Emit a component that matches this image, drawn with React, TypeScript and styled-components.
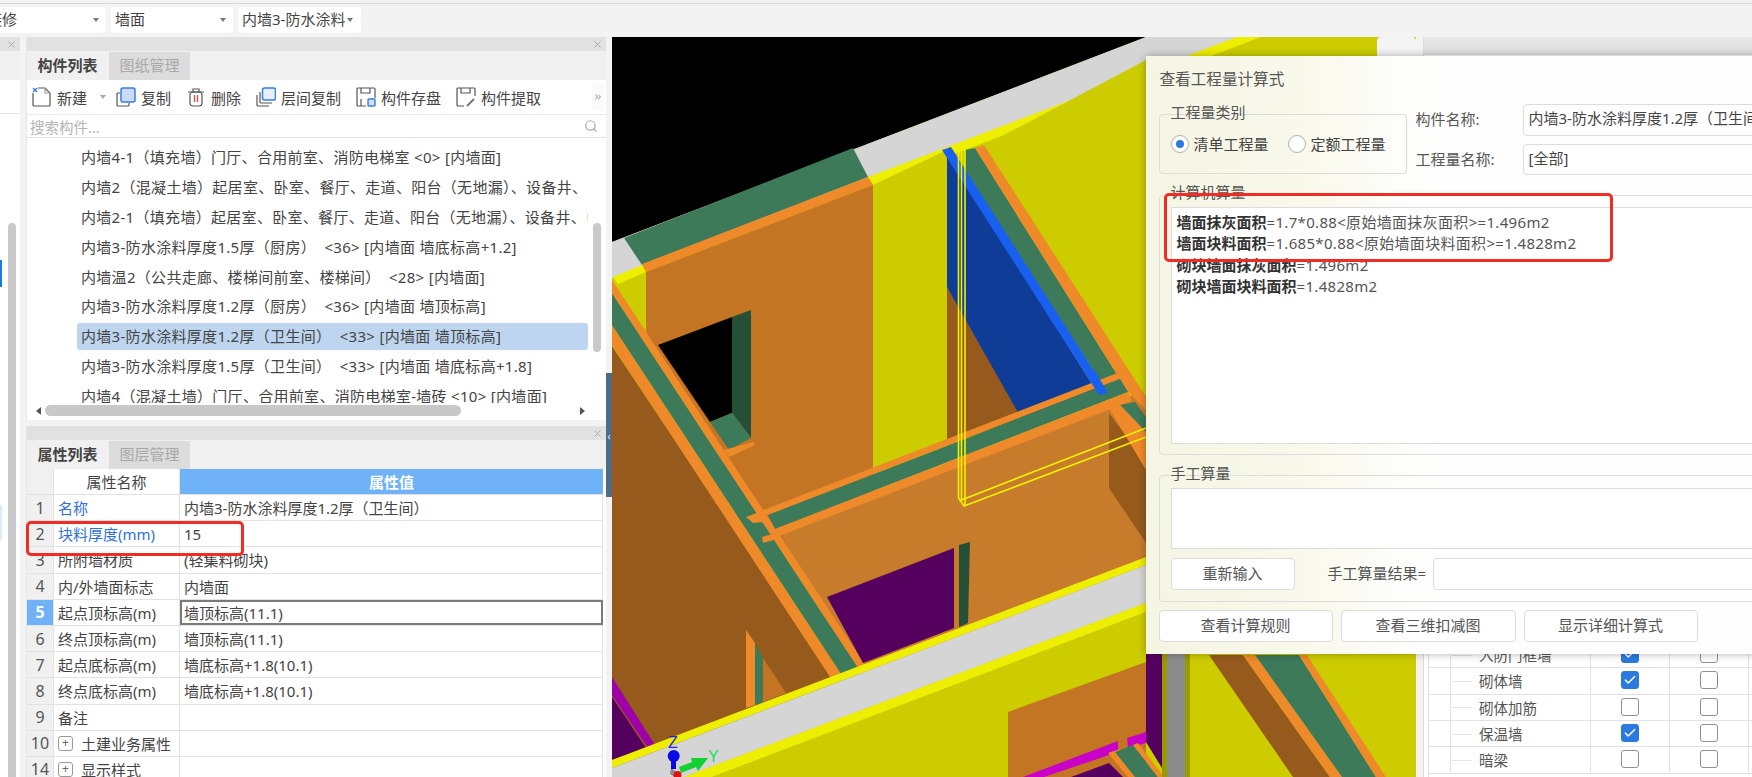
import React from 'react';
import styled, { createGlobalStyle } from 'styled-components';
import { X, Search, ChevronsRight, Check } from 'lucide-react';

const Global = createGlobalStyle`
  html, body { margin: 0; padding: 0; overflow: hidden; background: #f3f3f3; }
  * { box-sizing: border-box; }
  body { font-family: "Noto Sans", "Noto Sans CJK SC", sans-serif; font-size: 15px; color: #444; }
`;

const Root = styled.div`
  position: relative; width: 1752px; height: 777px; overflow: hidden;
  background: #f3f3f3; display: flex; flex-direction: column;
`;
const TopBar = styled.div`
  height: 37px; flex: none; display: flex; gap: 5px; padding-top: 7px; margin-top: 0;
  background: linear-gradient(#f3f3f3 3px, #d8d8d8 3px, #d8d8d8 4px, #f3f3f3 4px); overflow: hidden;
`;
const Combo = styled.div<{ $w: number; $ml?: number; $pad?: number }>`
  position: relative; width: ${p => p.$w}px; height: 26px; margin-left: ${p => p.$ml ?? 0}px;
  padding-left: ${p => p.$pad ?? 4}px; background: #fff; border-radius: 3px; line-height: 25px;
  white-space: nowrap; color: #444; display: flex;
`;
const Caret = styled.span<{ $right: number }>`
  position: absolute; right: ${p => p.$right}px; top: 11px; width: 0; height: 0;
  border-left: 3px solid transparent; border-right: 3px solid transparent; border-top: 4px solid #777;
`;
const Main = styled.div`display: flex; height: 740px; flex: none;`;
const LeftPanel = styled.div`
  position: relative; width: 20px; flex: none; margin-right: 6px; background: #fff;
  display: flex; flex-direction: column; overflow: hidden;
`;
const TitleBar = styled.div`
  height: 14px; flex: none; background: #e1e1e1; display: flex; align-items: center; justify-content: flex-end;
  padding-right: 3px; color: #aaa;
`;
const BlankTabs = styled.div`height: 29px; flex: none; background: #f0f0f0;`;
const BlankTools = styled.div`height: 34px; flex: none; border-bottom: 1px solid #e4e4e4;`;
const EdgeMark = styled.div<{ $top: number; $h: number; $c: string }>`
  position: absolute; left: 0; width: 2px; top: ${p => p.$top}px; height: ${p => p.$h}px; background: ${p => p.$c};
`;
const VScroll = styled.div<{ $left: number; $top: number; $h: number }>`
  position: absolute; left: ${p => p.$left}px; top: ${p => p.$top}px; width: 8px; height: ${p => p.$h}px;
  background: #c9c9c9; border-radius: 4px;
`;
const MidColumn = styled.div`width: 580px; flex: none; display: flex; flex-direction: column; gap: 6px;`;
const Panel = styled.section<{ $h: number }>`
  position: relative; height: ${p => p.$h}px; flex: none; background: #fff; display: flex; flex-direction: column;
  overflow: hidden; border-left: 1px solid #e6e6e6;
`;
const Tabs = styled.div`
  height: 29px; flex: none; display: flex; align-items: flex-end; background: #f0f0f0; gap: 1px;
`;
const Tab = styled.div<{ $on?: boolean }>`
  width: 81px; height: 28px; line-height: 27px; text-align: center; font-size: 15px;
  font-weight: ${p => (p.$on ? 700 : 400)}; color: ${p => (p.$on ? '#444' : '#a9a9a9')};
  background: ${p => (p.$on ? '#f0f0f0' : '#dcdcdc')};
`;
const Toolbar = styled.div`
  height: 35px; flex: none; display: flex; align-items: center; padding-left: 5px; padding-right: 2px;
  border-bottom: 1px solid #e8e8e8;
`;
const Tool = styled.div<{ $w: number }>`
  position: relative; width: ${p => p.$w}px; flex: none; display: flex; align-items: center; gap: 5px; white-space: nowrap; color: #444;
`;
const ToolCaret = styled.span`
  width: 0; height: 0; margin-left: 8px; border-left: 3px solid transparent; border-right: 3px solid transparent; border-top: 4px solid #aaa;
`;
const MoreBtn = styled.div`
  margin-left: auto; width: 12px; height: 28px; display: flex; align-items: center; justify-content: center; color: #777;
  border-radius: 3px; background: #fafafa;
`;
const SearchRow = styled.div`
  height: 23px; flex: none; display: flex; align-items: center; justify-content: space-between;
  padding: 0 8px 0 3px; color: #b4b4b4; font-size: 14.5px; border-bottom: 1px solid #e4e4e4;
`;
const List = styled.div`height: 265px; flex: none; padding: 4px 18px 0 50px; overflow: hidden; position: relative;`;
const ListRow = styled.div<{ $on?: boolean }>`
  height: 29.8px; display: flex; align-items: center; padding-left: 4px; white-space: pre; overflow: hidden;
  font-size: 15px; letter-spacing: 0.3px; color: #444; border-radius: 3px; position: relative; width: 511px;
  &::before {
    content: ''; position: absolute; left: 0; right: 0; top: 2px; bottom: 1px; border-radius: 3px;
    background: ${p => (p.$on ? '#bdd5ee' : 'transparent')}; z-index: 0;
  }
  & > span { position: relative; z-index: 1; }
`;
const HScroll = styled.div`
  height: 17px; flex: none; position: relative; display: flex; align-items: flex-start; padding: 2px 0 0 9px; gap: 4px;
`;
const Arrow = styled.span<{ $dir: 'l' | 'r' }>`
  width: 0; height: 0; margin-top: 2px; border-top: 4px solid transparent; border-bottom: 4px solid transparent;
  ${p => (p.$dir === 'l' ? 'border-right: 5px solid #555;' : 'border-left: 5px solid #555;')}
`;
const HThumb = styled.div`width: 416px; height: 11px; border-radius: 6px; background: #c8c8c8; margin-right: 115px;`;
const Table = styled.div`display: flex; flex-direction: column; width: 576px;`;
const Row = styled.div<{ $h?: number }>`
  display: grid; grid-template-columns: 27px 126px 423px; height: ${p => p.$h ?? 26.2}px; flex: none;
  border-bottom: 1px solid #e2e2e2;
`;
const Idx = styled.div<{ $on?: boolean }>`
  background: ${p => (p.$on ? '#70b2f6' : '#f0f0f0')}; color: ${p => (p.$on ? '#fff' : '#555')};
  font-weight: ${p => (p.$on ? 700 : 400)}; font-size: 16px; display: flex; align-items: center; justify-content: center;
  border-right: 1px solid #e2e2e2;
`;
const NameCell = styled.div<{ $blue?: boolean }>`
  display: flex; align-items: center; padding-left: 4px; gap: 8px; white-space: nowrap; border-right: 1px solid #e2e2e2;
  color: ${p => (p.$blue ? '#2f6fdc' : '#444')}; font-size: 15px;
`;
const HeadName = styled(NameCell)`justify-content: center; padding-left: 0;`;
const ValueCell = styled.div<{ $focus?: boolean }>`
  display: flex; align-items: center; padding-left: 4px; white-space: nowrap; color: #444; font-size: 15px;
  border-right: 1px solid #e2e2e2; ${p => (p.$focus ? 'border: 2px solid #7a7a7a; padding-left: 2px;' : '')}
`;
const HeadValue = styled.div`
  background: #70b2f6; color: #fff; font-weight: 700; display: flex; align-items: center; justify-content: center; font-size: 15px;
`;
const Expand = styled.span`
  width: 15px; height: 15px; border: 1px solid #999; border-radius: 3px; display: flex; align-items: center; justify-content: center;
  font-size: 12px; line-height: 1; color: #666; flex: none;
`;
const Divider = styled.div`position: relative; width: 6px; flex: none; background: #f3f3f3;`;
const DividerMark = styled.div`
  position: absolute; left: 0; top: 336px; width: 6px; height: 124px; background: #4f6b86; color: #dfe6ee;
  display: flex; align-items: center; justify-content: center; font-size: 11px; overflow: hidden;
`;
const Viewport = styled.div`width: 804px; height: 740px; flex: none; background: #cccc00; overflow: hidden; line-height: 0;`;
const RightPanel = styled.div`
  width: 329px; flex: none; margin-left: 7px; background: #fff; display: flex; flex-direction: column; border-left: 1px solid #dcdcdc;
`;
const RightTitle = styled.div`height: 18px; flex: none; background: linear-gradient(#e9e9e9, #dcdcdc);`;
const CheckList = styled.div`padding: 586px 0 0 4px; display: flex; flex-direction: column;`;
const CheckRow = styled.div`
  display: grid; grid-template-columns: 21px 141px 79px 79px; height: 26.33px; flex: none;
  border-top: 1px solid #e2e2e2; border-left: 1px solid #e2e2e2;
`;
const TreeCell = styled.div`
  position: relative; border-left: 1px solid #e2e2e2; border-right: 1px solid #e2e2e2; display: flex; align-items: center; padding-left: 28px;
  font-size: 14.5px; color: #555; white-space: nowrap;
  &::before { content: ''; position: absolute; left: 1px; top: 50%; width: 20px; border-top: 1px solid #e4e4e4; }
`;
const BoxCell = styled.div`display: flex; align-items: center; justify-content: center; border-right: 1px solid #e2e2e2;`;
const Tick = styled.span<{ $on?: boolean }>`
  width: 18px; height: 18px; margin-top: -1px; border-radius: 3px; display: flex; align-items: center; justify-content: center; color: #fff;
  ${p => (p.$on ? 'background: #2b7ae0; border: 1px solid #2b7ae0;' : 'background: #fff; border: 1px solid #8f8f8f;')}
`;
const SideTab = styled.div`
  position: absolute; left: 1377px; top: 37px; width: 39px; height: 19px; background: #f4f4f4; border-radius: 4px 4px 0 0;
`;

/* dialog */
const Dialog = styled.div`
  position: absolute; left: 1146px; top: 56px; width: 640px; height: 598px; padding: 0 0 0 12.5px;
  background: linear-gradient(90deg, #f5f5e4 0, #f9f9ec 170px, #fcfcf8 235px, #fefefe 300px, #fefefe 100%);
  box-shadow: 0 0 8px rgba(0, 0, 0, 0.3); display: flex; flex-direction: column;
`;
const DialogTitle = styled.div`height: 58px; flex: none; padding: 11px 0 0 1px; line-height: 24px; font-size: 15.6px; color: #555;`;
const TopRow = styled.div`display: flex; height: 60px; flex: none;`;
const Group = styled.div<{ $w?: number; $h: number }>`
  position: relative; flex: none; width: ${p => (p.$w ? `${p.$w}px` : 'auto')}; height: ${p => p.$h}px;
  border: 1px solid #dcdcdc; border-radius: 4px;
`;
const Legend = styled.span<{ $top?: number }>`
  position: absolute; left: 11px; top: ${p => p.$top ?? -13}px; line-height: 20px; font-size: 15px; color: #555; white-space: nowrap;
`;
const RadioRow = styled.div`display: flex; align-items: center; padding: 19px 0 0 11px; line-height: 20px;`;
const Radio = styled.span<{ $on?: boolean }>`
  width: 18px; height: 18px; border-radius: 50%; border: 1px solid #b0b0b0; background: #fff; flex: none; margin-right: 5px;
  display: flex; align-items: center; justify-content: center;
  &::after { content: ''; width: 8px; height: 8px; border-radius: 50%; background: ${p => (p.$on ? '#2b7ae0' : 'transparent')}; }
`;
const RadioLabel = styled.span<{ $mr?: number }>`margin-right: ${p => p.$mr ?? 0}px; font-size: 15px; color: #444; white-space: nowrap;`;
const Fields = styled.div`display: grid; grid-template-columns: 107px 1fr; row-gap: 8px; margin-left: 9px; margin-top: -10px; height: 71px; flex: 1;`;
const FieldLabel = styled.div`display: flex; align-items: center; padding-bottom: 3px; font-size: 15px; color: #555; white-space: nowrap;`;
const Input = styled.div<{ $w?: number; $h?: number }>`
  height: ${p => p.$h ?? 31}px; ${p => (p.$w ? `width: ${p.$w}px;` : '')} background: #fff; border: 1px solid #dcdcdc; border-radius: 4px;
  padding-left: 5px; line-height: 26px; font-size: 15px; color: #444; white-space: nowrap; overflow: hidden;
`;
const CalcGroup = styled(Group)`margin-top: 21px; padding: 11px 0 0 11px;`;
const CalcArea = styled.div`
  height: 237px; background: #fff; border: 1px solid #dcdcdc; padding: 4px 0 0 5px; font-size: 15px; letter-spacing: 0.32px; line-height: 21.3px; color: #555; white-space: pre;
`;
const Bold = styled.b`color: #333; font-weight: 700; letter-spacing: 0;`;
const ManualGroup = styled(Group)`margin-top: 20px; padding: 12px 0 0 11px; display: flex; flex-direction: column; gap: 9px;`;
const ManualArea = styled.div`height: 61px; flex: none; background: #fff; border: 1px solid #dcdcdc;`;
const ManualRow = styled.div`display: flex; align-items: center; height: 32px;`;
const Btn = styled.div<{ $w: number; $h?: number }>`
  width: ${p => p.$w}px; height: ${p => p.$h ?? 32}px; flex: none; background: #fff; border: 1px solid #dcdcdc; border-radius: 4px;
  display: flex; align-items: center; justify-content: center; padding-bottom: 3px; font-size: 15px; color: #555; white-space: nowrap;
`;
const ResultLabel = styled.span`margin: 0 7px 3px 33px; font-size: 15px; color: #555; white-space: nowrap;`;
const BottomRow = styled.div`display: flex; gap: 8px; margin-top: 8px;`;
const RedBox = styled.div<{ $l: number; $t: number; $w: number; $h: number }>`
  position: absolute; left: ${p => p.$l}px; top: ${p => p.$t}px; width: ${p => p.$w}px; height: ${p => p.$h}px;
  border: 3px solid #f02c24; border-radius: 5px; pointer-events: none;
`;

/* ---------- drawings ---------- */
const C = {
  black: '#000000', grey: '#d5d5d5', yel: '#eeee00', olive: '#cccc00', or: '#ee8a2a', wall: '#c47524', wall2: '#c67c2b',
  brown: '#955a1c', green: '#3d7a5a', dgreen: '#264f38', blue: '#0f3c96', bblue: '#1a60f0', purple: '#55005f', mag: '#c800c8', mag2: '#a000a8',
};
const polys: [string, string][] = [
  [C.black, '612,37 1146,37 612,242'],
  [C.grey, '612,242 1146,37 1240,37 868,178 642,266 612,278'],
  [C.green, '853,148 868,177 642,265 624,238'],
  [C.yel, '613,277 642,265 646,272 618,284'],
  [C.yel, '868,177 1237,37 1261,37 873,185'],
  [C.or, '868,177 873,185 646,272 642,264'],
  [C.wall, '646,272 873,185 873,520 780,560 646,332'],
  [C.wall2, '779,530 1146,390 1146,570 860,680'],
  [C.olive, '873,185 947,150 947,470 873,490'],
  [C.brown, '947,287 1030,415 947,445'],
  [C.blue, '947,153 1100,397 1025,425 947,287'],
  [C.olive, '985,145 1146,60 1146,397'],
  [C.green, '965,150 975,148 1128,392 1108,393 965,172'],
  [C.bblue, '942,150 951,147 1108,393 1099,395'],
  [C.or, '975,148 984,145 1146,397 1146,410 1128,392'],
  [C.brown, '612,346 648,400 834,677 860,680 612,790'],
  [C.or, '612,325 612,345 832,680 845,680'],
  [C.green, '612,293 612,325 845,680 866,680'],
  [C.or, '612,280 612,293 866,680 875,680'],
  [C.black, '658,345 732,317 732,413 710,422'],
  [C.dgreen, '732,317 751,310 751,438 732,413'],
  [C.green, '710,422 732,413 751,438 729,450'],
  [C.or, '724,450 753,442 755,445 729,457'],
  [C.or, '761,511 1120,372 1125,377 768,515'],
  [C.green, '768,515 1120,379 1128,392 775,529'],
  [C.or, '775,529 1128,392 1132,401 779,536'],
  [C.bblue, '1085,373 1095,371 1108,393 1099,395'],
  [C.or, '746,517 762,511 764,522 753,523'],
  [C.or, '762,537 779,532 781,538 763,543'],
  [C.brown, '1109,413 1146,463 1146,543 1109,488'],
  [C.green, '1120,405 1135,402 1146,417 1146,432'],
  [C.or, '1109,408 1120,405 1146,432 1146,470'],
  [C.purple, '827,597 954,548 954,628 863,663'],
  [C.dgreen, '959,545 970,542 968,623 959,627'],
  [C.or, '746,630 755,643 755,705 746,708'],
  [C.green, '755,643 763,658 763,702 755,705'],
  [C.wall, '763,658 786,693 763,702'],
  [C.mag2, '612,677 655,745 648,748 612,695'],
  [C.purple, '612,697 646,748 612,760'],
  [C.yel, '612,760 1146,557 1146,565 612,768'],
  [C.grey, '612,768 1146,565 1146,603 684,777 612,777'],
  [C.yel, '684,777 1146,603 1146,612 712,777'],
  [C.olive, '712,777 1146,612 1146,660 1008,712 1008,777'],
  [C.wall, '1008,712 1146,662 1146,777 1008,777'],
  [C.purple, '1071,777 1109,763 1123,777'],
  [C.mag, '1023,777 1118,741 1118,752 1044,777'],
  [C.mag, '1127,738 1146,732 1146,743 1128,748'],
  [C.or, '1108,753 1120,749 1145,777 1128,777'],
  [C.green, '1115,752 1133,745 1158,777 1135,777'],
  [C.or, '1133,745 1138,743 1164,777 1158,777'],
  [C.purple, '1146,654 1162,654 1162,768 1146,742'],
  ['#999900', '1162,654 1190,654 1190,777 1162,777'],
  ['#8c8c8c', '1167,654 1185,654 1185,777 1167,777'],
  [C.brown, '1209,655 1243,655 1330,777 1293,777'],
  [C.or, '1243,655 1255,655 1342,777 1330,777'],
  [C.green, '1255,655 1299,655 1376,777 1342,777'],
  [C.or, '1299,655 1307,655 1386,777 1376,777'],
];

const Scene = () => (
  <svg width="804" height="740" viewBox="612 37 804 740">
    <rect x="612" y="37" width="804" height="740" fill={C.olive} />
    {polys.map(([f, p], i) => <polygon key={i} points={p} fill={f} />)}
    <g fill="none" stroke="#f2f200" strokeWidth="1.6">
      <path d="M958.5 152V498L964 506L1146 437" />
      <path d="M965 150V506" />
      <path d="M961.5 152V500L1146 428" />
      <path d="M958 152L965 149" />
    </g>
    <polygon points="671,768 681,775 675,777 670,774" fill="#8a8a8a" />
    <rect x="671" y="756" width="5" height="13" fill="#0a0ae6" />
    <circle cx="673.7" cy="756" r="6" fill="#0a0ae6" />
    <circle cx="677.5" cy="775" r="4" fill="#e01010" />
    <polygon points="679,767 692,762 691,758 708,758 698,771 696,767 681,773" fill="#12d030" />
    <text x="668" y="748" fontSize="16" fill="#2424e0" fontFamily="Liberation Sans, sans-serif">Z</text>
    <text x="708" y="762" fontSize="16" fill="#18e050" fontFamily="Liberation Sans, sans-serif">Y</text>
  </svg>
);

const Ico = ({ children }: { children: React.ReactNode }) => (
  <svg width="20" height="20" viewBox="0 0 20 20" fill="none" stroke="#555" strokeWidth="1.2" style={{ flex: 'none' }}>{children}</svg>
);
const NewIcon = () => (
  <Ico>
    <path d="M1 6V18a1 1 0 0 0 1 1H17a1 1 0 0 0 1-1V6L13 1H6" />
    <path d="M13 1V6H18" stroke="#999" />
    <path d="M1 1L5 5M5 1L1 5" stroke="#3a7be0" strokeWidth="1.4" />
  </Ico>
);
const CopyIcon = () => (
  <Ico>
    <path d="M4 6H2a1 1 0 0 0-1 1V18a1 1 0 0 0 1 1H12a1 1 0 0 0 1-1V16" />
    <rect x="5" y="1" width="14" height="14" rx="2" stroke="#3a7be0" strokeWidth="1.5" fill="#c7dcf7" />
  </Ico>
);
const TrashIcon = () => (
  <Ico>
    <path d="M2 5H18M7 5V2H13V5" />
    <rect x="4" y="5" width="12" height="14" rx="3" />
    <path d="M8.5 8V15M11.5 8V15" stroke="#e05545" strokeWidth="1.4" />
  </Ico>
);
const LayerIcon = () => (
  <Ico>
    <path d="M1 8V18a1 1 0 0 0 1 1H13" />
    <path d="M4 5V15a1 1 0 0 0 1 1H16" />
    <rect x="6.5" y="1" width="13" height="12" rx="2" stroke="#3a7be0" strokeWidth="1.5" fill="#e6effb" />
  </Ico>
);
const SaveIcon = () => (
  <Ico>
    <path d="M10 19H2a1 1 0 0 1-1-1V2a1 1 0 0 1 1-1H18a1 1 0 0 1 1 1V11" />
    <path d="M5 1V6H14V1M5 19V12" />
    <rect x="12" y="12" width="7" height="7" rx="1" stroke="#3a7be0" strokeWidth="1.4" fill="#cfe2f8" />
  </Ico>
);
const PickIcon = () => (
  <Ico>
    <path d="M8 19H2a1 1 0 0 1-1-1V2a1 1 0 0 1 1-1H18a1 1 0 0 1 1 1V9" />
    <path d="M5 1V6H14V1" />
    <path d="M11 19L18 12" stroke="#777" strokeWidth="2" />
  </Ico>
);

const listItems = [
  '内墙4-1（填充墙）门厅、合用前室、消防电梯室 <0> [内墙面]',
  '内墙2（混凝土墙）起居室、卧室、餐厅、走道、阳台（无地漏）、设备井、电梯前室',
  '内墙2-1（填充墙）起居室、卧室、餐厅、走道、阳台（无地漏）、设备井、电梯前室',
  '内墙3-防水涂料厚度1.5厚（厨房）  <36> [内墙面 墙底标高+1.2]',
  '内墙温2（公共走廊、楼梯间前室、楼梯间）  <28> [内墙面]',
  '内墙3-防水涂料厚度1.2厚（厨房）  <36> [内墙面 墙顶标高]',
  '内墙3-防水涂料厚度1.2厚（卫生间）  <33> [内墙面 墙顶标高]',
  '内墙3-防水涂料厚度1.5厚（卫生间）  <33> [内墙面 墙底标高+1.8]',
  '内墙4（混凝土墙）门厅、合用前室、消防电梯室-墙砖 <10> [内墙面]',
];
const props: [string, string, string][] = [
  ['1', '名称', '内墙3-防水涂料厚度1.2厚（卫生间）'],
  ['2', '块料厚度(mm)', '15'],
  ['3', '所附墙材质', '(轻集料砌块)'],
  ['4', '内/外墙面标志', '内墙面'],
  ['5', '起点顶标高(m)', '墙顶标高(11.1)'],
  ['6', '终点顶标高(m)', '墙顶标高(11.1)'],
  ['7', '起点底标高(m)', '墙底标高+1.8(10.1)'],
  ['8', '终点底标高(m)', '墙底标高+1.8(10.1)'],
  ['9', '备注', ''],
];
const checks: [string, boolean, boolean][] = [
  ['入防门框墙', true, false],
  ['砌体墙', true, false],
  ['砌体加筋', false, false],
  ['保温墙', true, false],
  ['暗梁', false, false],
];

const CheckBox = ({ on }: { on: boolean }) => (
  <Tick $on={on}>{on && <Check size={14} strokeWidth={2.6} />}</Tick>
);

export default function App() {
  return (
    <Root>
      <Global />
      <TopBar>
        <Combo $w={132} $ml={-26} $pad={13}>装修<Caret $right={7} /></Combo>
        <Combo $w={122}>墙面<Caret $right={7} /></Combo>
        <Combo $w={123}>内墙3-防水涂料<Caret $right={8} /></Combo>
      </TopBar>
      <Main>
        <LeftPanel>
          <TitleBar><X size={11} /></TitleBar>
          <BlankTabs />
          <BlankTools />
          <EdgeMark $top={223} $h={27} $c="#1a7ae0" />
          <EdgeMark $top={468} $h={35} $c="#dcebfb" />
          <VScroll $left={8} $top={186} $h={560} />
        </LeftPanel>
        <MidColumn>
          <Panel $h={383}>
            <TitleBar><X size={11} /></TitleBar>
            <Tabs><Tab $on>构件列表</Tab><Tab>图纸管理</Tab></Tabs>
            <Toolbar>
              <Tool $w={84}><NewIcon />新建<ToolCaret /></Tool>
              <Tool $w={70}><CopyIcon />复制</Tool>
              <Tool $w={70}><TrashIcon />删除</Tool>
              <Tool $w={100}><LayerIcon />层间复制</Tool>
              <Tool $w={100}><SaveIcon />构件存盘</Tool>
              <Tool $w={100}><PickIcon />构件提取</Tool>
              <MoreBtn><ChevronsRight size={10} /></MoreBtn>
            </Toolbar>
            <SearchRow>搜索构件...<Search size={14} color="#aaa" /></SearchRow>
            <List>
              {listItems.map((t, i) => <ListRow key={i} $on={i === 6}><span>{t}</span></ListRow>)}
            </List>
            <HScroll><Arrow $dir="l" /><HThumb /><Arrow $dir="r" /></HScroll>
            <VScroll $left={566} $top={186} $h={129} />
          </Panel>
          <Panel $h={351}>
            <TitleBar><X size={11} /></TitleBar>
            <Tabs><Tab $on>属性列表</Tab><Tab>图层管理</Tab></Tabs>
            <Table>
              <Row $h={26}>
                <Idx />
                <HeadName>属性名称</HeadName>
                <HeadValue>属性值</HeadValue>
              </Row>
              {props.map(([n, k, v]) => (
                <Row key={n}>
                  <Idx $on={n === '5'}>{n}</Idx>
                  <NameCell $blue={n === '1' || n === '2'}>{k}</NameCell>
                  <ValueCell $focus={n === '5'}>{v}</ValueCell>
                </Row>
              ))}
              <Row>
                <Idx>10</Idx>
                <NameCell><Expand>+</Expand>土建业务属性</NameCell>
                <ValueCell />
              </Row>
              <Row>
                <Idx>14</Idx>
                <NameCell><Expand>+</Expand>显示样式</NameCell>
                <ValueCell />
              </Row>
            </Table>
          </Panel>
        </MidColumn>
        <Divider><DividerMark>‹</DividerMark></Divider>
        <Viewport><Scene /></Viewport>
        <RightPanel>
          <RightTitle />
          <CheckList>
            {checks.map(([t, a, b]) => (
              <CheckRow key={t}>
                <span />
                <TreeCell>{t}</TreeCell>
                <BoxCell><CheckBox on={a} /></BoxCell>
                <BoxCell><CheckBox on={b} /></BoxCell>
              </CheckRow>
            ))}
            <CheckRow />
          </CheckList>
        </RightPanel>
      </Main>
      <SideTab />

      <Dialog>
        <DialogTitle>查看工程量计算式</DialogTitle>
        <TopRow>
          <Group $w={248} $h={60}>
            <Legend>工程量类别</Legend>
            <RadioRow>
              <Radio $on /><RadioLabel $mr={19}>清单工程量</RadioLabel>
              <Radio /><RadioLabel>定额工程量</RadioLabel>
            </RadioRow>
          </Group>
          <Fields>
            <FieldLabel>构件名称:</FieldLabel>
            <Input $h={32}>内墙3-防水涂料厚度1.2厚（卫生间）</Input>
            <FieldLabel>工程量名称:</FieldLabel>
            <Input>[全部]</Input>
          </Fields>
        </TopRow>
        <CalcGroup $h={260}>
          <Legend $top={-14}>计算机算量</Legend>
          <CalcArea>
            <Bold>墙面抹灰面积</Bold>=1.7*0.88&lt;原始墙面抹灰面积&gt;=1.496m2{'\n'}
            <Bold>墙面块料面积</Bold>=1.685*0.88&lt;原始墙面块料面积&gt;=1.4828m2{'\n'}
            <Bold>砌块墙面抹灰面积</Bold>=1.496m2{'\n'}
            <Bold>砌块墙面块料面积</Bold>=1.4828m2
          </CalcArea>
        </CalcGroup>
        <ManualGroup $h={127}>
          <Legend>手工算量</Legend>
          <ManualArea />
          <ManualRow>
            <Btn $w={124}>重新输入</Btn>
            <ResultLabel>手工算量结果=</ResultLabel>
            <Input $w={400} $h={32} />
          </ManualRow>
        </ManualGroup>
        <BottomRow>
          <Btn $w={174}>查看计算规则</Btn>
          <Btn $w={175}>查看三维扣减图</Btn>
          <Btn $w={174}>显示详细计算式</Btn>
        </BottomRow>
      </Dialog>
      <RedBox $l={26} $t={521} $w={218} $h={35} />
      <RedBox $l={1164} $t={193} $w={449} $h={69} />
    </Root>
  );
}
